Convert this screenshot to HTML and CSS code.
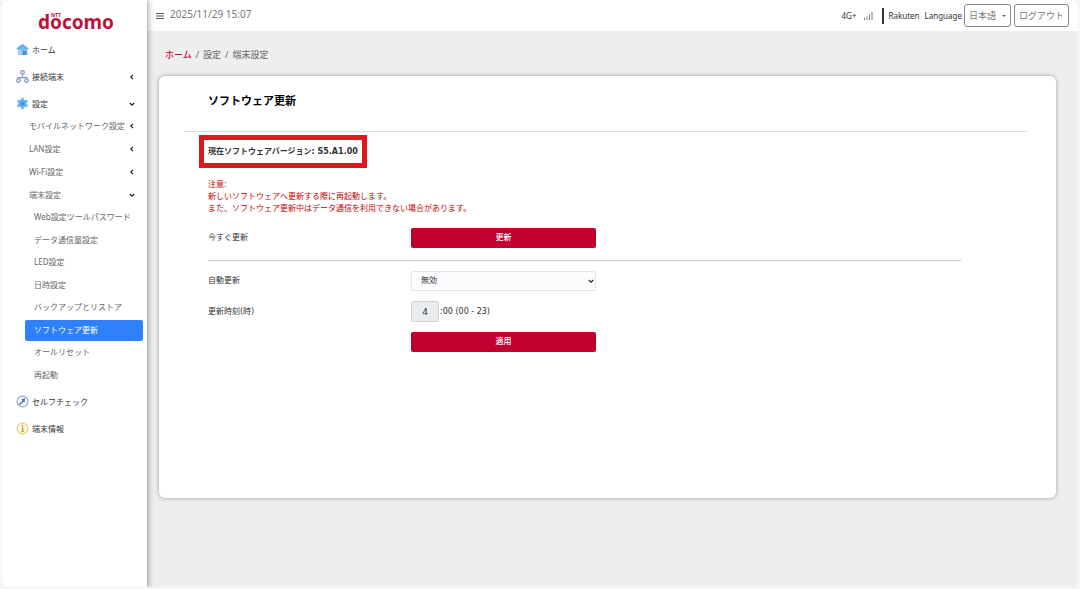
FILE: index.html
```
<!DOCTYPE html>
<html lang="ja">
<head>
<meta charset="utf-8">
<meta name="viewport" content="width=device-width, initial-scale=1">
<title>ソフトウェア更新</title>
<link rel="stylesheet" href="styles.css">
</head>
<body>
<div class="app">
  <aside class="sidebar">
    <a class="logo" href="#">docomo<span class="logo-ntt">NTT</span></a>
    <nav>
      <ul class="menu">
        <li><a class="item" href="#">
          <svg class="icon" viewBox="0 0 24 24"><path d="M1 10 12 2l11 8-2 3v9H4v-9z" fill="#7db8ec"/><path d="M1 10 12 2l11 8-2 2-9-6-9 6z" fill="#6aabe6"/><path d="M13 22v-7h6v7z" fill="#4a88cc"/><path d="M5 13h5v8H5z" fill="#a9d3f6"/></svg>
          <span>ホーム</span></a></li>
        <li><a class="item" href="#">
          <svg class="icon" viewBox="0 0 24 24" fill="#dfe7f8" stroke="#7f93c8" stroke-width="2"><path d="M12 8v6M4 18v-4h16v4" fill="none"/><circle cx="12" cy="4.500" r="3.500"/><circle cx="4.500" cy="19.500" r="3.500"/><circle cx="19.500" cy="19.500" r="3.500"/></svg>
          <span>接続端末</span>
          <svg class="chev" viewBox="0 0 6 6"><path d="M4 .8 1.800 3 4 5.200"/></svg></a></li>
        <li><a class="item" href="#">
          <svg class="icon" viewBox="0 0 24 24"><g stroke="#7dbcf5" stroke-width="6" stroke-linecap="round"><path d="M12 4v16M5 8l14 8M5 16l14-8"/></g><circle cx="12" cy="12" r="7" fill="#64aaf0"/><circle cx="12" cy="12" r="3" fill="#3f8ce0"/></svg>
          <span>設定</span>
          <svg class="chev" viewBox="0 0 6 6"><path d="M.8 2 3 4.200 5.200 2"/></svg></a>
          <ul class="submenu">
            <li><a class="item" href="#"><span>モバイルネットワーク設定</span><svg class="chev" viewBox="0 0 6 6"><path d="M4 .8 1.800 3 4 5.200"/></svg></a></li>
            <li><a class="item" href="#"><span>LAN設定</span><svg class="chev" viewBox="0 0 6 6"><path d="M4 .8 1.800 3 4 5.200"/></svg></a></li>
            <li><a class="item" href="#"><span>Wi-Fi設定</span><svg class="chev" viewBox="0 0 6 6"><path d="M4 .8 1.800 3 4 5.200"/></svg></a></li>
            <li><a class="item" href="#"><span>端末設定</span><svg class="chev" viewBox="0 0 6 6"><path d="M.8 2 3 4.200 5.200 2"/></svg></a>
              <ul class="leafmenu">
                <li><a class="leaf" href="#">Web設定ツールパスワード</a></li>
                <li><a class="leaf" href="#">データ通信量設定</a></li>
                <li><a class="leaf" href="#">LED設定</a></li>
                <li><a class="leaf" href="#">日時設定</a></li>
                <li><a class="leaf" href="#">バックアップとリストア</a></li>
                <li><a class="leaf active" href="#" aria-current="page">ソフトウェア更新</a></li>
                <li><a class="leaf" href="#">オールリセット</a></li>
                <li><a class="leaf" href="#">再起動</a></li>
              </ul></li>
          </ul></li>
        <li><a class="item" href="#">
          <svg class="icon" viewBox="0 0 24 24"><circle cx="12" cy="12" r="10" fill="#f4f6ff" stroke="#8fa2dc" stroke-width="2"/><path d="m7 17 7-7" stroke="#4d68b8" stroke-width="2.500" stroke-linecap="round"/><path d="M10 8 17 6l-1.500 8z" fill="#4d68b8"/></svg>
          <span>セルフチェック</span></a></li>
        <li><a class="item" href="#">
          <svg class="icon" viewBox="0 0 24 24"><circle cx="12" cy="12" r="10" fill="#fffbe8" stroke="#e6cc70" stroke-width="2"/><circle cx="12" cy="7" r="1.600" fill="#b8922c"/><path d="M10 11h2.500v6M9.500 17h5.500" fill="none" stroke="#b8922c" stroke-width="2"/></svg>
          <span>端末情報</span></a></li>
      </ul>
    </nav>
  </aside>

  <div class="page">
    <header class="topbar">
      <button class="toggle" type="button" aria-label="メニュー">
        <svg viewBox="0 0 8 8"><path d="M0 1.500h8M0 4h8M0 6.500h8"/></svg>
      </button>
      <time class="clock">2025/11/29 15:07</time>
      <div class="status">
        <span class="net">4G+</span>
        <svg class="signal" viewBox="0 0 10 8"><path d="M1.500 8V6M4 8V4.500M6.500 8V2.500M9 8V0"/></svg>
        <span class="carrier">Rakuten</span>
        <span class="lang-label" id="lang">Language</span>
        <button class="top-btn lang-btn" type="button" aria-describedby="lang">日本語<span class="caret"></span></button>
        <button class="top-btn" type="button">ログアウト</button>
      </div>
    </header>

    <main class="main">
      <nav class="crumbs"><a href="#">ホーム</a><span>/</span><span>設定</span><span>/</span><span>端末設定</span></nav>
      <section class="card">
        <h1>ソフトウェア更新</h1>
        <div class="content">
          <p class="version">現在ソフトウェアバージョン: S5.A1.00</p>
          <p class="notice">注意:<br>新しいソフトウェアへ更新する際に再起動します。<br>また、ソフトウェア更新中はデータ通信を利用できない場合があります。</p>
          <form class="form">
            <div class="row update-row">
              <span>今すぐ更新</span>
              <button class="primary" type="button">更新</button>
            </div>
            <div class="row">
              <label for="auto">自動更新</label>
              <div class="select-wrap">
                <select id="auto"><option>無効</option><option>有効</option></select>
                <svg class="select-arrow" viewBox="0 0 6 6"><path d="M.8 2 3 4.200 5.200 2"/></svg>
              </div>
            </div>
            <div class="row">
              <label for="hour">更新時刻(時)</label>
              <div class="time"><input id="hour" type="text" value="4" disabled><span>:00 (00 - 23)</span></div>
            </div>
            <div class="row">
              <button class="primary apply" type="button">適用</button>
            </div>
          </form>
        </div>
      </section>
    </main>
  </div>
</div>
</body>
</html>
```
FILE: styles.css
```
* { box-sizing: border-box; }

body {
  margin: 0;
  padding: 0 2px 2px;
  min-height: 100vh;
  display: flex;
  background: #f6f6f6;
  color: #333;
  font: 8px/12px "Noto Sans", "Noto Sans CJK JP", sans-serif;
}

button, input, select { font: inherit; color: inherit; margin: 0; }
ul { list-style: none; margin: 0; padding: 0; }
a { color: inherit; text-decoration: none; }
p, h1 { margin: 0; }

.app {
  flex: 1;
  display: flex;
  background: #eee;
  border-radius: 6px;
  overflow: hidden;
}

/* Sidebar */
.sidebar {
  width: 145px;
  flex: none;
  background: #fff;
  box-shadow: 1px 0 6px rgba(0, 0, 0, .4);
  z-index: 1;
}

.logo {
  position: relative;
  display: block;
  height: 36px;
  padding: 9px 0 0 36px;
  color: #b8133c;
  font-size: 19px;
  line-height: 26px;
  font-weight: 700;
}

.logo-ntt {
  position: absolute;
  left: 49px;
  top: 12px;
  font-size: 5px;
  line-height: 6px;
}

.item {
  display: flex;
  align-items: center;
  gap: 3px;
  height: 27px;
  padding: 0 12px 0 14px;
}

.icon { width: 13px; height: 13px; }

.chev { width: 6px; height: 6px; margin-left: auto; }

.chev path, .select-arrow path {
  fill: none;
  stroke: #222;
  stroke-width: 1.2;
}

.submenu .item {
  height: 23px;
  padding-left: 27px;
  color: #666;
}

.submenu { margin: -3px 0 1px; }

.leafmenu {
  display: grid;
  grid-template-rows: repeat(4, 23px 22px);
  padding: 1px 4px 0 23px;
}

.leaf {
  display: block;
  height: 21px;
  padding-left: 9px;
  line-height: 20px;
  border-radius: 2px;
  color: #666;
}

.leaf.active { background: #2f80fb; color: #fff; }

/* Top bar */
.page {
  flex: 1;
  min-width: 0;
  display: flex;
  flex-direction: column;
}

.topbar {
  display: flex;
  align-items: center;
  height: 31px;
  padding: 0 9px;
  background: #fff;
}

.toggle {
  width: 8px;
  height: 8px;
  padding: 0;
  border: 0;
  background: none;
  display: flex;
}

.toggle svg { width: 8px; height: 8px; stroke: #555; stroke-width: 1; }

.clock {
  margin: 0 auto 3px 6px;
  font-size: 10px;
  color: #777;
}

.status { display: flex; align-items: center; }
.signal { width: 10px; height: 8px; margin: 0 9px 0 6px; stroke: #777; stroke-width: 1; }

.carrier {
  padding: 2px 5px;
  border-left: 2px solid #333;
}

.lang-label { margin-right: 2px; }

.top-btn {
  height: 23px;
  padding: 0 4px;
  border: 1px solid #888;
  border-radius: 3px;
  background: #fff;
  color: #777;
  font-size: 9px;
}

.lang-btn { display: flex; align-items: center; gap: 6px; margin-right: 3px; }

.caret {
  border: 2px solid transparent;
  border-top-color: #666;
  border-bottom: 0;
}

/* Page body */
.main { padding: 17px 22px 24px 12px; }

.crumbs {
  display: flex;
  gap: 4px;
  padding-left: 6px;
  font-size: 9px;
  line-height: 14px;
  color: #666;
}

.crumbs a { color: #b8133c; font-weight: 500; }

.card {
  min-height: 422px;
  margin-top: 14px;
  padding: 0 28px 24px 25px;
  border-radius: 6px;
  background: #fff;
  box-shadow: 0 0 4px rgba(0, 0, 0, .35);
}

h1 {
  padding: 17px 0 22px 24px;
  border-bottom: 1px solid #ddd;
  color: #000;
  font-size: 11px;
  line-height: 16px;
  font-weight: 700;
}

.content {
  padding: 12px 67px 0 24px;
  font-family: "DejaVu Sans", "Noto Sans CJK JP", sans-serif;
}

.version {
  width: max-content;
  line-height: 15px;
  font-weight: 600;
  outline: 5px solid #df1820;
  outline-offset: 4px;
}

.notice { margin-top: 20px; color: #c00; }

.form { display: grid; row-gap: 10px; margin-top: 13px; }

.row {
  display: grid;
  grid-template-columns: 203fr 185fr 365fr;
  align-items: center;
}

.update-row {
  padding-bottom: 12px;
  border-bottom: 1px solid #ccc;
}

.primary {
  height: 20px;
  padding: 0;
  border: 0;
  border-radius: 2px;
  background: #c2002f;
  color: #fff;
  font-weight: 500;
}

.apply { grid-column: 2; }

.select-wrap { position: relative; }

select {
  appearance: none;
  display: block;
  width: 100%;
  height: 20px;
  padding: 0 9px;
  border: 1px solid #e4e4ea;
  border-radius: 2px;
  background: #fcfcfe;
}

.select-arrow {
  position: absolute;
  right: 2px;
  top: 7px;
  width: 6px;
  height: 6px;
}

.time { display: flex; align-items: center; gap: 1px; }

input {
  width: 28px;
  height: 21px;
  padding: 0;
  border: 1px solid #ced4da;
  border-radius: 2px;
  background: #e9ecef;
  text-align: center;
  font-size: 9px;
}
```
